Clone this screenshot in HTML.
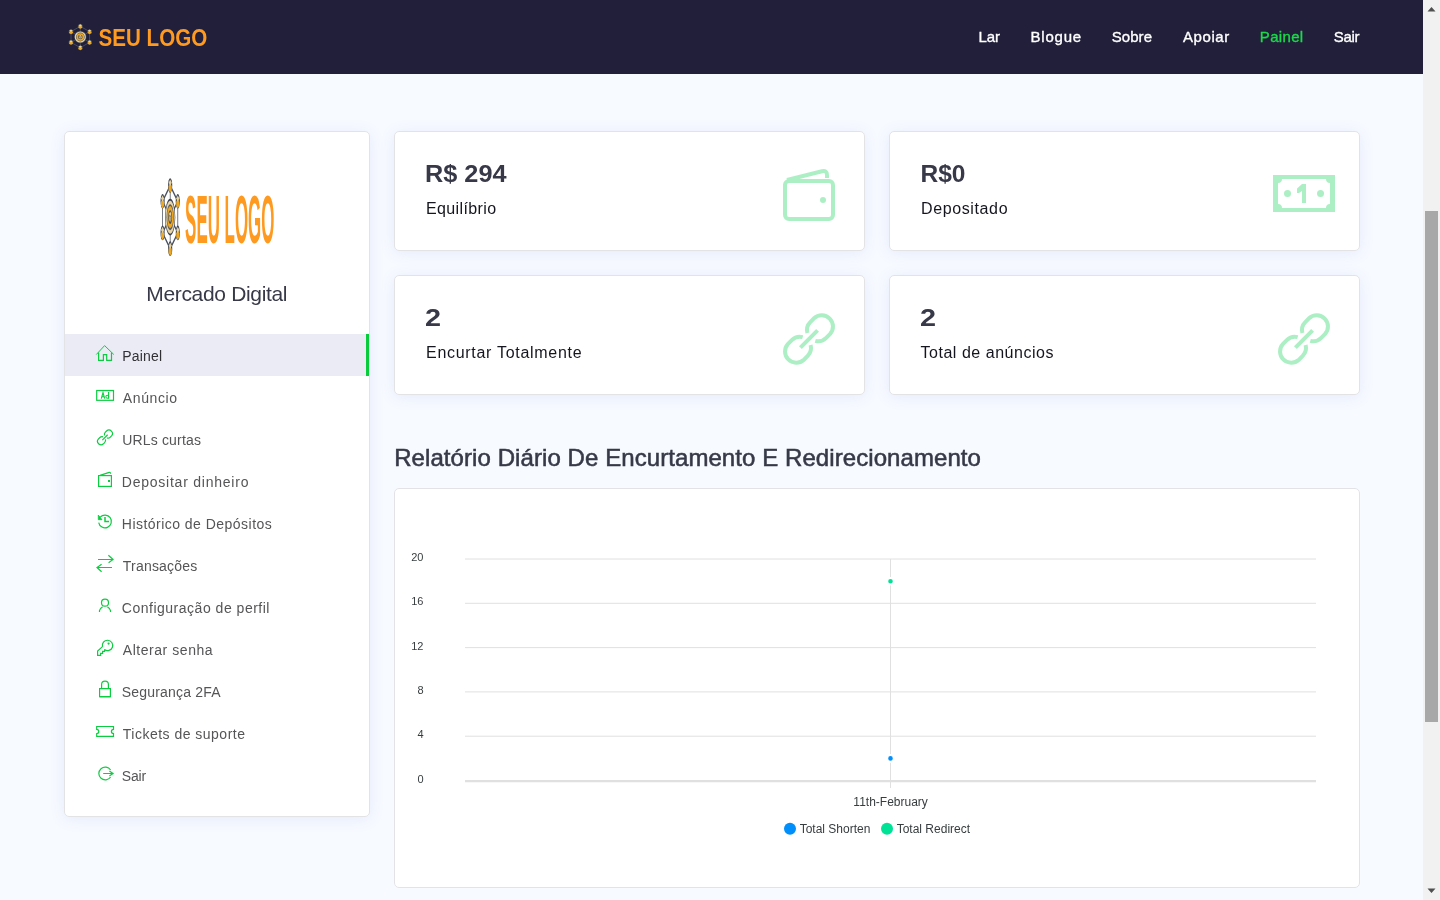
<!DOCTYPE html>
<html lang="pt">
<head>
<meta charset="utf-8">
<title>Painel</title>
<style>
*{box-sizing:border-box;margin:0;padding:0}
html,body{width:1440px;height:900px;overflow:hidden}
body{background:#f7faff;font-family:"Liberation Sans",sans-serif;position:relative;color:#373948}
.abs{position:absolute}
.t{position:absolute;white-space:nowrap;line-height:1}
/* scrollbar */
#sb{position:absolute;left:1423px;top:0;width:17px;height:900px;background:#f1f1f1}
#sb .thumb{position:absolute;left:2px;top:211px;width:13px;height:511px;background:#a8a8a8}
#sb svg{position:absolute;left:0;top:0}
/* header */
#hdr{position:absolute;left:0;top:0;width:1423px;height:74px;background:#211f3a}
#hdr .nav{position:absolute;top:26.5px;font-size:15px;line-height:20px;color:#fff;white-space:nowrap;-webkit-text-stroke:.35px currentColor}
/* cards */
.card{position:absolute;background:#fff;border:1px solid #e3e3e6;border-radius:5px;box-shadow:0 2px 15px rgba(76,100,214,.1)}
#side{left:63.5px;top:131px;width:306px;height:686px}
.mi{position:absolute;left:0;width:304px;height:42px}
.mi.act{background:#ebebf5;border-right:3px solid #08cc3c}
.mi svg{position:absolute;left:31px;top:10px;width:20px;height:20px;overflow:visible}
.mi span{position:absolute;left:58px;top:1px;line-height:42px;font-size:14px;color:#555557;white-space:nowrap}
.mi.act span{color:#303034}
.stat{width:471px;height:120px}
.stat .v{position:absolute;left:31px;top:29.6px;font-size:24px;font-weight:bold;line-height:24px;color:#373948;white-space:nowrap}
.stat .l{position:absolute;left:31px;top:66.6px;font-size:16px;line-height:20px;color:#15151f;white-space:nowrap}
.stat svg{position:absolute;overflow:visible}
#brand{left:83px;top:150.3px;font-size:21px;line-height:24px;color:#373948}
#slogo{left:91px;top:34.8px;width:123px;height:100.3px}
#h2{left:394px;top:444.4px;font-size:24px;line-height:28px;color:#373948;-webkit-text-stroke:.55px #373948}
/*FIT-START*/
#n0{letter-spacing:-0.050px;transform:translateX(-0.60px);transform-origin:left center}
#n1{letter-spacing:0.780px;transform:translateX(-0.50px);transform-origin:left center}
#n2{letter-spacing:0.075px;transform:translateX(0.70px);transform-origin:left center}
#n3{letter-spacing:0.580px;transform:translateX(0.00px);transform-origin:left center}
#n4{letter-spacing:0.340px;transform:translateX(-0.20px);transform-origin:left center}
#n5{letter-spacing:-0.350px;transform:translateX(0.75px);transform-origin:left center}
#m0{letter-spacing:0.180px;transform:translateX(-0.30px);transform-origin:left center}
#m1{letter-spacing:0.617px;transform:translateX(0.30px);transform-origin:left center}
#m2{letter-spacing:0.170px;transform:translateX(-0.30px);transform-origin:left center}
#m3{letter-spacing:0.765px;transform:translateX(-0.70px);transform-origin:left center}
#m4{letter-spacing:0.471px;transform:translateX(-0.70px);transform-origin:left center}
#m5{letter-spacing:0.211px;transform:translateX(0.30px);transform-origin:left center}
#m6{letter-spacing:0.510px;transform:translateX(-0.70px);transform-origin:left center}
#m7{letter-spacing:0.542px;transform:translateX(0.30px);transform-origin:left center}
#m8{letter-spacing:0.192px;transform:translateX(-0.70px);transform-origin:left center}
#m9{letter-spacing:0.488px;transform:translateX(0.30px);transform-origin:left center}
#m10{letter-spacing:-0.167px;transform:translateX(-0.70px);transform-origin:left center}
#v0{transform:translateX(-1.00px) scaleX(1.053);transform-origin:left center}
#v1{transform:translateX(-0.50px) scaleX(1.021);transform-origin:left center}
#v2{transform:translateX(-1.00px) scaleX(1.200);transform-origin:left center}
#v3{transform:translateX(-1.00px) scaleX(1.200);transform-origin:left center}
#l0{letter-spacing:0.378px;transform:translateX(0.50px);transform-origin:left center}
#l1{letter-spacing:0.622px;transform:translateX(0.50px);transform-origin:left center}
#l2{letter-spacing:0.708px;transform:translateX(0.50px);transform-origin:left center}
#l3{letter-spacing:0.525px;transform:translateX(0.00px);transform-origin:left center}
#brand{letter-spacing:-0.336px;transform:translateX(-1.20px);transform-origin:left center}
#h2{letter-spacing:0.076px;transform:translateX(0.20px);transform-origin:left center}
/*FIT-END*/
#chart{left:393.5px;top:488px;width:966px;height:400px;box-shadow:none}
</style>
</head>
<body>
<div id="wrap" style="position:absolute;left:0;top:0;width:1440px;height:900px;will-change:transform">
<!-- HEADER -->
<div id="hdr">
  <svg class="abs" style="left:63px;top:20px;overflow:visible" width="150" height="34" viewBox="63 20 150 34"><use href="#logo"/></svg>
  <span class="nav" id="n0" style="left:979px">Lar</span>
  <span class="nav" id="n1" style="left:1031px">Blogue</span>
  <span class="nav" id="n2" style="left:1111px">Sobre</span>
  <span class="nav" id="n3" style="left:1183px">Apoiar</span>
  <span class="nav" id="n4" style="left:1260px;color:#1ada48">Painel</span>
  <span class="nav" id="n5" style="left:1333px">Sair</span>
</div>

<!-- SIDEBAR -->
<div class="card" id="side">
  <svg class="abs" id="slogo" preserveAspectRatio="none" viewBox="63 20 150 34"><use href="#logo"/></svg>
  <div class="t" id="brand">Mercado Digital</div>
  <div class="mi act" style="top:202px"><span id="m0">Painel</span></div>
  <div class="mi" style="top:244px"><span id="m1">Anúncio</span></div>
  <div class="mi" style="top:286px"><span id="m2">URLs curtas</span></div>
  <div class="mi" style="top:328px"><span id="m3">Depositar dinheiro</span></div>
  <div class="mi" style="top:370px"><span id="m4">Histórico de Depósitos</span></div>
  <div class="mi" style="top:412px"><span id="m5">Transações</span></div>
  <div class="mi" style="top:454px"><span id="m6">Configuração de perfil</span></div>
  <div class="mi" style="top:496px"><span id="m7">Alterar senha</span></div>
  <div class="mi" style="top:538px"><span id="m8">Segurança 2FA</span></div>
  <div class="mi" style="top:580px"><span id="m9">Tickets de suporte</span></div>
  <div class="mi" style="top:622px"><span id="m10">Sair</span></div>
</div>

<!-- SIDEBAR ICONS (page coords) -->
<svg class="abs" style="left:0;top:0" width="400" height="900" viewBox="0 0 400 900" fill="none" stroke="#0ccd40" stroke-width="1.2" stroke-linejoin="miter">
  <!-- home -->
  <path d="M96.3 354.5 L104.6 345.6 L113.8 354.5" stroke-width="1"/>
  <path d="M98.6 352.6 V360.4 H103.4 V354.6 H106.7 V360.4 H111.5 V352.6"/>
  <!-- ad -->
  <rect x="96.7" y="390.5" width="16.8" height="9.8"/>
  <path d="M101.3 398.7 L103 392.6 L104.7 398.7 M102 396.7 H104" stroke-width="1.15"/>
  <path d="M108.6 392 V398.8" stroke-width="1.15"/><circle cx="107.3" cy="396.8" r="1.45" stroke-width="1.05"/>
  <!-- link small -->
  <g transform="translate(105 437.4) scale(.31) translate(-809 -339)" stroke-width="3.9"><use href="#lnk"/></g>
  <!-- wallet -->
  <rect x="98.6" y="475.6" width="12.8" height="10.8"/>
  <path d="M100 475.4 L109.2 472.4 Q110.6 472.2 110.6 473.8"/>
  <rect x="108" y="480" width="2" height="2" fill="#0ccd40" stroke="none"/>
  <!-- history -->
  <path d="M98.7 522.6 A6.4 6.4 0 1 0 100.2 517.2"/>
  <path d="M98.3 515 V519.7 H102 Z" fill="#0ccd40" stroke-width=".8"/>
  <path d="M105 517 V521.5 H109"  stroke-width="1.5"/>
  <!-- exchange -->
  <path d="M98 559.5 H113 M108.4 555.3 L113 559.5 L108.6 562.7 M112 567.5 H97 M101.6 564.3 L97 567.5 L101.6 571.7"/>
  <!-- user -->
  <circle cx="105" cy="602.7" r="3.5"/>
  <path d="M99.5 612 V610.6 Q99.8 608.6 102.6 606.8 M110.5 612 V610.6 Q110.2 608.6 107.4 606.8"/>
  <!-- key -->
  <path d="M102.5 646.6 L97.6 651 V655.4 H100.6 V653.4 H102.6 V651.4 H104.6 V649.6"/>
  <path d="M104.4 649.6 A5.2 5.2 0 1 0 102.5 646.8"/>
  <circle cx="108.6" cy="643.6" r="1.1" fill="#0ccd40" stroke="none"/>
  <!-- lock -->
  <path d="M99.6 688.6 H110.4 V696.6 H99.6 Z M99.6 697 H110.4" />
  <path d="M101.6 688.4 V684.6 A3.4 3.4 0 0 1 108.4 684.6 V688.4"/>
  <!-- ticket -->
  <path d="M96.7 726.5 H113.5 V729.4 A2.1 2.1 0 0 0 113.5 733.6 V736.3 H96.7 V733.6 A2.1 2.1 0 0 0 96.7 729.4 Z"/>
  <!-- sign-out -->
  <path d="M110.6 770 A6.4 6.4 0 1 0 110.6 777"/>
  <path d="M103.2 773.5 H112.6 M109.4 771 L113 773.5 L109.4 776"/>
</svg>

<!-- STAT CARDS -->
<div class="card stat" style="left:393.5px;top:131px">
  <div class="v" id="v0">R$ 294</div><div class="l" id="l0">Equilíbrio</div>
</div>
<div class="card stat" style="left:888.5px;top:131px">
  <div class="v" id="v1">R$0</div><div class="l" id="l1">Depositado</div>
</div>
<div class="card stat" style="left:393.5px;top:275px">
  <div class="v" id="v2">2</div><div class="l" id="l2">Encurtar Totalmente</div>
</div>
<div class="card stat" style="left:888.5px;top:275px">
  <div class="v" id="v3">2</div><div class="l" id="l3">Total de anúncios</div>
</div>

<div class="t" id="h2">Relatório Diário De Encurtamento E Redirecionamento</div>

<!-- CHART -->
<div class="card" id="chart">
</div>

<!-- CHART SVG (page coords) -->
<svg class="abs" style="left:0;top:480px" width="1423" height="420" viewBox="0 480 1423 420" font-family="Liberation Sans, sans-serif">
<line x1="465" x2="1316" y1="559.0" y2="559.0" stroke="#e0e0e0" stroke-width="1"/>
<text x="423.5" y="561.0" text-anchor="end" font-size="11" fill="#373d3f">20</text>
<line x1="465" x2="1316" y1="603.3" y2="603.3" stroke="#e0e0e0" stroke-width="1"/>
<text x="423.5" y="605.3" text-anchor="end" font-size="11" fill="#373d3f">16</text>
<line x1="465" x2="1316" y1="647.6" y2="647.6" stroke="#e0e0e0" stroke-width="1"/>
<text x="423.5" y="649.6" text-anchor="end" font-size="11" fill="#373d3f">12</text>
<line x1="465" x2="1316" y1="691.9" y2="691.9" stroke="#e0e0e0" stroke-width="1"/>
<text x="423.5" y="693.9" text-anchor="end" font-size="11" fill="#373d3f">8</text>
<line x1="465" x2="1316" y1="736.2" y2="736.2" stroke="#e0e0e0" stroke-width="1"/>
<text x="423.5" y="738.2" text-anchor="end" font-size="11" fill="#373d3f">4</text>
<line x1="465" x2="1316" y1="780.5" y2="780.5" stroke="#e0e0e0" stroke-width="1"/>
<text x="423.5" y="782.5" text-anchor="end" font-size="11" fill="#373d3f">0</text>
<line x1="465" x2="1316" y1="781.6" y2="781.6" stroke="#e0e0e0" stroke-width="1.2"/>
<line x1="890.5" x2="890.5" y1="559" y2="788" stroke="#e0e0e0" stroke-width="1"/>
<circle cx="890.5" cy="581.2" r="3.3" fill="#00e396" stroke="#fff" stroke-width="2"/>
<circle cx="890.5" cy="758.4" r="3.3" fill="#008ffb" stroke="#fff" stroke-width="2"/>
<text x="890.6" y="805.8" text-anchor="middle" font-size="12" fill="#373d3f">11th-February</text>
<circle cx="790" cy="828.8" r="6" fill="#008ffb"/><text x="799.7" y="833" font-size="12" fill="#373d3f">Total Shorten</text>
<circle cx="887" cy="828.8" r="6" fill="#00e396"/><text x="896.7" y="833" font-size="12" fill="#373d3f">Total Redirect</text>
</svg>

<!-- STAT ICONS (page coords) -->
<svg class="abs" style="left:0;top:0" width="1423" height="420" viewBox="0 0 1423 420" fill="none" stroke="#adefc4" stroke-width="4">
  <rect x="785" y="181" width="48" height="38" rx="4"/>
  <path d="M787 180 L822 171.3 Q827 170.2 827 175 V178"/>
  <circle cx="823" cy="200" r="3" fill="#adefc4" stroke="none"/>
  <path fill="#adefc4" stroke="none" fill-rule="evenodd" d="M1273 175 H1335 V212 H1273 Z M1282 179 H1326 A4 4 0 0 0 1330 183 V204 A4 4 0 0 0 1326 208 H1282 A4 4 0 0 0 1278 204 V183 A4 4 0 0 0 1282 179 Z"/>
  <path fill="#adefc4" stroke="none" d="M1306 184 V203 H1302 V191 L1299 193 H1297 V188.5 L1302 184 Z"/>
  <circle cx="1287.5" cy="193.5" r="3.5" fill="#adefc4" stroke="none"/>
  <circle cx="1320.5" cy="193.5" r="3.5" fill="#adefc4" stroke="none"/>
  <use href="#lnk"/>
  <use href="#lnk" x="495"/>
</svg>

<!-- SCROLLBAR -->
<div id="sb">
  <div class="thumb"></div>
  <svg width="17" height="900"><path d="M4.5 11.5 L8.5 7 L12.5 11.5 Z M4.5 888.5 L12.5 888.5 L8.5 893 Z" fill="#505050"/></svg>
</div>

</div>
<!-- SVG DEFS -->
<svg width="0" height="0" style="position:absolute">
<defs>
<g id="logo">
<polygon points="80.30,26.30 89.57,31.65 89.57,42.35 80.30,47.70 71.03,42.35 71.03,31.65" fill="none" stroke="#49505f" stroke-width=".9"/>
<line x1="80.30" y1="37.00" x2="80.30" y2="26.30" stroke="#49505f" stroke-width=".9"/>
<line x1="80.30" y1="37.00" x2="89.57" y2="31.65" stroke="#49505f" stroke-width=".9"/>
<line x1="80.30" y1="37.00" x2="89.57" y2="42.35" stroke="#49505f" stroke-width=".9"/>
<line x1="80.30" y1="37.00" x2="80.30" y2="47.70" stroke="#49505f" stroke-width=".9"/>
<line x1="80.30" y1="37.00" x2="71.03" y2="42.35" stroke="#49505f" stroke-width=".9"/>
<line x1="80.30" y1="37.00" x2="71.03" y2="31.65" stroke="#49505f" stroke-width=".9"/>
<circle cx="80.30" cy="26.30" r="2.5" fill="#3b4252"/>
<path d="M80.30 25.30 l1.9 1.1 v1.3 l-1.9 1.1 l-1.9 -1.1 v-1.3 z" fill="#eea71f"/>
<path d="M80.30 24.20 l1.9 1.1 l-1.9 1.1 l-1.9 -1.1 z" fill="#e6d3a4"/>
<circle cx="89.57" cy="31.65" r="2.5" fill="#3b4252"/>
<path d="M89.57 30.65 l1.9 1.1 v1.3 l-1.9 1.1 l-1.9 -1.1 v-1.3 z" fill="#eea71f"/>
<path d="M89.57 29.55 l1.9 1.1 l-1.9 1.1 l-1.9 -1.1 z" fill="#e6d3a4"/>
<circle cx="89.57" cy="42.35" r="2.5" fill="#3b4252"/>
<path d="M89.57 41.35 l1.9 1.1 v1.3 l-1.9 1.1 l-1.9 -1.1 v-1.3 z" fill="#eea71f"/>
<path d="M89.57 40.25 l1.9 1.1 l-1.9 1.1 l-1.9 -1.1 z" fill="#e6d3a4"/>
<circle cx="80.30" cy="47.70" r="2.5" fill="#3b4252"/>
<path d="M80.30 46.70 l1.9 1.1 v1.3 l-1.9 1.1 l-1.9 -1.1 v-1.3 z" fill="#eea71f"/>
<path d="M80.30 45.60 l1.9 1.1 l-1.9 1.1 l-1.9 -1.1 z" fill="#e6d3a4"/>
<circle cx="71.03" cy="42.35" r="2.5" fill="#3b4252"/>
<path d="M71.03 41.35 l1.9 1.1 v1.3 l-1.9 1.1 l-1.9 -1.1 v-1.3 z" fill="#eea71f"/>
<path d="M71.03 40.25 l1.9 1.1 l-1.9 1.1 l-1.9 -1.1 z" fill="#e6d3a4"/>
<circle cx="71.03" cy="31.65" r="2.5" fill="#3b4252"/>
<path d="M71.03 30.65 l1.9 1.1 v1.3 l-1.9 1.1 l-1.9 -1.1 v-1.3 z" fill="#eea71f"/>
<path d="M71.03 29.55 l1.9 1.1 l-1.9 1.1 l-1.9 -1.1 z" fill="#e6d3a4"/>
<circle cx="80.30" cy="37.00" r="6.2" fill="#3b4252"/>
<circle cx="80.30" cy="37.00" r="5.6" fill="#e7d5a8"/>
<circle cx="80.30" cy="37.00" r="4.4" fill="#565b66"/>
<circle cx="80.30" cy="37.00" r="3.8" fill="#eea71f"/>
<circle cx="80.30" cy="37.00" r="2.3" fill="#4a4f5e"/>
<path d="M80.30 35.10 l1.5 .85 l-1.5 .85 l-1.5 -.85 z" fill="#e6d3a4"/>
<path d="M80.20 37.00 v1.7 l-1.4 -.8 v-1.7 z" fill="#eea71f"/>
<path d="M80.40 37.00 v1.7 l1.4 -.8 v-1.7 z" fill="#c9b88c"/>
<text x="98.5" y="45.6" font-family="Liberation Sans, sans-serif" font-weight="bold" font-size="23.5" fill="#ff9a20" textLength="108.8" lengthAdjust="spacingAndGlyphs">SEU LOGO</text>
</g>
<g id="lnk" fill="none" stroke-linecap="butt">
<path d="M807.4 332.9 A11.25 11.25 0 0 1 810.3 322.05 L814.05 318.3 A11.25 11.25 0 0 1 829.95 334.2 L826.2 337.95 A11.25 11.25 0 0 1 815.3 340.9"/>
<path d="M810.6 345.1 A11.25 11.25 0 0 1 807.7 355.95 L803.95 359.7 A11.25 11.25 0 0 1 788.05 343.8 L791.8 340.05 A11.25 11.25 0 0 1 802.7 337.1"/>
<path d="M800.4 347.6 L817.6 330.4"/>
</g>
</defs>
</svg>
</body>
</html>
